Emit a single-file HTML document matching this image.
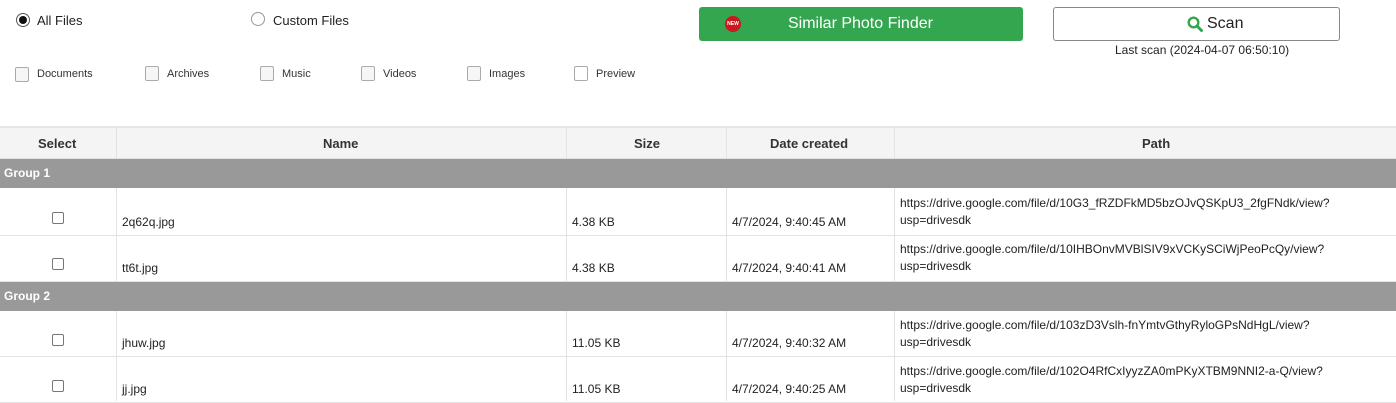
<!DOCTYPE html>
<html><head><meta charset="utf-8"><style>
*{margin:0;padding:0;box-sizing:border-box}
body{width:1396px;height:401px;overflow:hidden;background:#fff;font-family:"Liberation Sans",sans-serif;color:#222;position:relative}
.a{position:absolute;white-space:nowrap}
.radio{position:absolute;width:14px;height:14px;border-radius:50%;border:1px solid #999;background:#fff}
.cb{position:absolute;width:14px;height:15px;border:1px solid #aaa;border-radius:2px;background:#f6f6f6}
.lbl{font-size:11px;color:#333}
.sc{position:absolute;width:12px;height:12px;border:1px solid #777;border-radius:2px;background:#fff}
.hl{position:absolute;top:128px;height:31px;border-left:1px solid #e2e2e2}
.hdr{font-size:13px;font-weight:bold;color:#333;top:136px}
.row{position:absolute;left:0;width:1396px;border-bottom:1px solid #e3e3e3}
.grp{position:absolute;left:0;width:1396px;height:29px;background:#999;color:#fff;font-size:12px;font-weight:bold;padding:7px 4px}
.vl{position:absolute;width:1px;background:#e3e3e3}
.t{font-size:12px;color:#222}
</style></head><body>
<div class="radio" style="left:16px;top:13px;border-color:#555"><div style="position:absolute;left:2px;top:2px;width:8px;height:8px;border-radius:50%;background:#111"></div></div>
<div class="a" style="left:37px;top:13px;font-size:13px">All Files</div>
<div class="radio" style="left:251px;top:12px"></div>
<div class="a" style="left:273px;top:13px;font-size:13px">Custom Files</div>

<div class="cb" style="left:15px;top:67px"></div><div class="a lbl" style="left:37px;top:68px">Documents</div>
<div class="cb" style="left:145px;top:66px"></div><div class="a lbl" style="left:167px;top:68px">Archives</div>
<div class="cb" style="left:260px;top:66px"></div><div class="a lbl" style="left:282px;top:68px">Music</div>
<div class="cb" style="left:361px;top:66px"></div><div class="a lbl" style="left:383px;top:68px">Videos</div>
<div class="cb" style="left:467px;top:66px"></div><div class="a lbl" style="left:489px;top:68px">Images</div>
<div class="cb" style="left:574px;top:66px;background:#fff"></div><div class="a lbl" style="left:596px;top:68px">Preview</div>

<div class="a" style="left:699px;top:7px;width:324px;height:34px;background:#35a650;border-radius:3px"></div>
<div class="a" style="left:725px;top:16px;width:16px;height:16px;border-radius:50%;background:#c9181e;color:#fff;font-size:5px;font-weight:bold;text-align:center;line-height:16px">NEW</div>
<div class="a" style="left:788px;top:15px;font-size:16px;color:#fff">Similar Photo Finder</div>

<div class="a" style="left:1053px;top:7px;width:287px;height:34px;border:1px solid #888;border-radius:3px"></div>
<svg class="a" style="left:1187px;top:16px" width="16" height="16" viewBox="0 0 16 16"><circle cx="6.5" cy="6.5" r="4.8" fill="none" stroke="#35a650" stroke-width="2.4"/><path d="M10 10l4.5 4.5" stroke="#35a650" stroke-width="3" stroke-linecap="round"/></svg>
<div class="a" style="left:1207px;top:15px;font-size:16px;color:#222">Scan</div>
<div class="a" style="left:1115px;top:43px;font-size:12px;color:#222">Last scan (2024-04-07 06:50:10)</div>

<div class="a" style="left:0;top:126px;width:1396px;height:34px;background:#f4f4f4;border-top:2px solid #e6e6e6;border-bottom:2px solid #e2e2e2"></div>
<div class="hl" style="left:116px"></div><div class="hl" style="left:566px"></div><div class="hl" style="left:726px"></div><div class="hl" style="left:894px"></div>
<div class="a hdr" style="left:38px">Select</div>
<div class="a hdr" style="left:323px">Name</div>
<div class="a hdr" style="left:634px">Size</div>
<div class="a hdr" style="left:770px">Date created</div>
<div class="a hdr" style="left:1142px">Path</div>

<div class="grp" style="top:159px">Group 1</div>
<div class="row" style="top:188px;height:48px"></div>
<div class="row" style="top:236px;height:46px"></div>
<div class="grp" style="top:282px">Group 2</div>
<div class="row" style="top:311px;height:46px"></div>
<div class="row" style="top:357px;height:46px"></div>
<div class="vl" style="left:116px;top:188px;height:94px"></div><div class="vl" style="left:566px;top:188px;height:94px"></div><div class="vl" style="left:726px;top:188px;height:94px"></div><div class="vl" style="left:894px;top:188px;height:94px"></div>
<div class="vl" style="left:116px;top:311px;height:90px"></div><div class="vl" style="left:566px;top:311px;height:90px"></div><div class="vl" style="left:726px;top:311px;height:90px"></div><div class="vl" style="left:894px;top:311px;height:90px"></div>

<div class="sc" style="left:52px;top:212px"></div>
<div class="a t" style="left:122px;top:215px">2q62q.jpg</div><div class="a t" style="left:572px;top:215px">4.38 KB</div><div class="a t" style="left:732px;top:215px">4/7/2024, 9:40:45 AM</div>
<div class="a t" style="left:900px;top:195px;line-height:17px">https://drive.google.com/file/d/10G3_fRZDFkMD5bzOJvQSKpU3_2fgFNdk/view?<br>usp=drivesdk</div>

<div class="sc" style="left:52px;top:258px"></div>
<div class="a t" style="left:122px;top:261px">tt6t.jpg</div><div class="a t" style="left:572px;top:261px">4.38 KB</div><div class="a t" style="left:732px;top:261px">4/7/2024, 9:40:41 AM</div>
<div class="a t" style="left:900px;top:241px;line-height:17px">https://drive.google.com/file/d/10IHBOnvMVBlSIV9xVCKySCiWjPeoPcQy/view?<br>usp=drivesdk</div>

<div class="sc" style="left:52px;top:334px"></div>
<div class="a t" style="left:122px;top:336px">jhuw.jpg</div><div class="a t" style="left:572px;top:336px">11.05 KB</div><div class="a t" style="left:732px;top:336px">4/7/2024, 9:40:32 AM</div>
<div class="a t" style="left:900px;top:317px;line-height:17px">https://drive.google.com/file/d/103zD3Vslh-fnYmtvGthyRyloGPsNdHgL/view?<br>usp=drivesdk</div>

<div class="sc" style="left:52px;top:380px"></div>
<div class="a t" style="left:122px;top:382px">jj.jpg</div><div class="a t" style="left:572px;top:382px">11.05 KB</div><div class="a t" style="left:732px;top:382px">4/7/2024, 9:40:25 AM</div>
<div class="a t" style="left:900px;top:363px;line-height:17px">https://drive.google.com/file/d/102O4RfCxIyyzZA0mPKyXTBM9NNI2-a-Q/view?<br>usp=drivesdk</div>
</body></html>
